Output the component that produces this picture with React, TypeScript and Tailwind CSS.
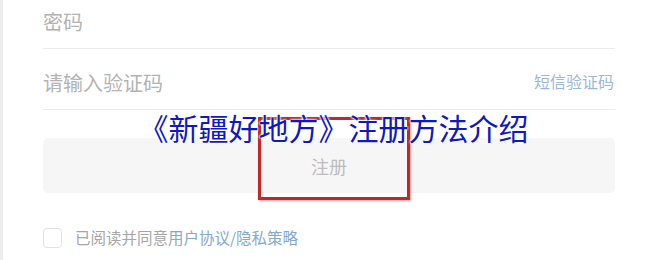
import React from "react";

const font = { fontFamily: '"Noto Sans CJK SC", "Noto Sans", sans-serif' };

export default function App() {
  return (
    <div
      className="relative w-[650px] h-[260px] bg-white border-l-[3px] border-[#ededed] overflow-hidden"
      style={font}
    >
      <div className="flex flex-col pl-[40px] w-[612px]">
        <div className="h-[48px] flex items-center pb-[4px] text-[20px] text-[#b3b3b3] leading-none">
          密码
        </div>
        <div className="h-[1px] bg-[#ececec]" />
        <div className="h-[60px] flex items-center justify-between pt-[8px]">
          <span className="text-[20px] text-[#b3b3b3] leading-none">请输入验证码</span>
          <span className="text-[16px] text-[#9bb8d6] leading-none mb-[4px] mr-[1px]">短信验证码</span>
        </div>
        <div className="h-[1px] bg-[#ececec]" />
        <div className="h-[28px]" />
        <div className="h-[55px] rounded-[5px] bg-[#f6f6f7] flex items-center justify-center">
          <span className="text-[18px] text-[#bdbdbd] leading-none">注册</span>
        </div>
        <div className="h-[35px]" />
        <div className="flex items-center h-[20px]">
          <div className="w-[19px] h-[20px] rounded-[4px] border border-[#e2e2e2] bg-white" />
          <span className="ml-[13px] text-[15.5px] leading-none text-[#a6a6a6]">
            已阅读并同意<span className="text-[#86a8cc]">用户协议/隐私策略</span>
          </span>
        </div>
      </div>

      <div className="absolute left-[255px] top-[117px] w-[152px] h-[83px] border-[3px] border-[#c4262b] shadow-[1px_1px_2px_rgba(120,0,0,0.4)]" />

      <div
        className="absolute left-0 right-0 top-[112px] flex justify-center pl-[14px] text-[30px] leading-none text-[#1018c0] whitespace-nowrap"
        style={{ textShadow: "0 0 2px #fff, 0 0 2px #fff, 0 0 3px #fff" }}
      >
        《新疆好地方》注册方法介绍
      </div>
    </div>
  );
}
